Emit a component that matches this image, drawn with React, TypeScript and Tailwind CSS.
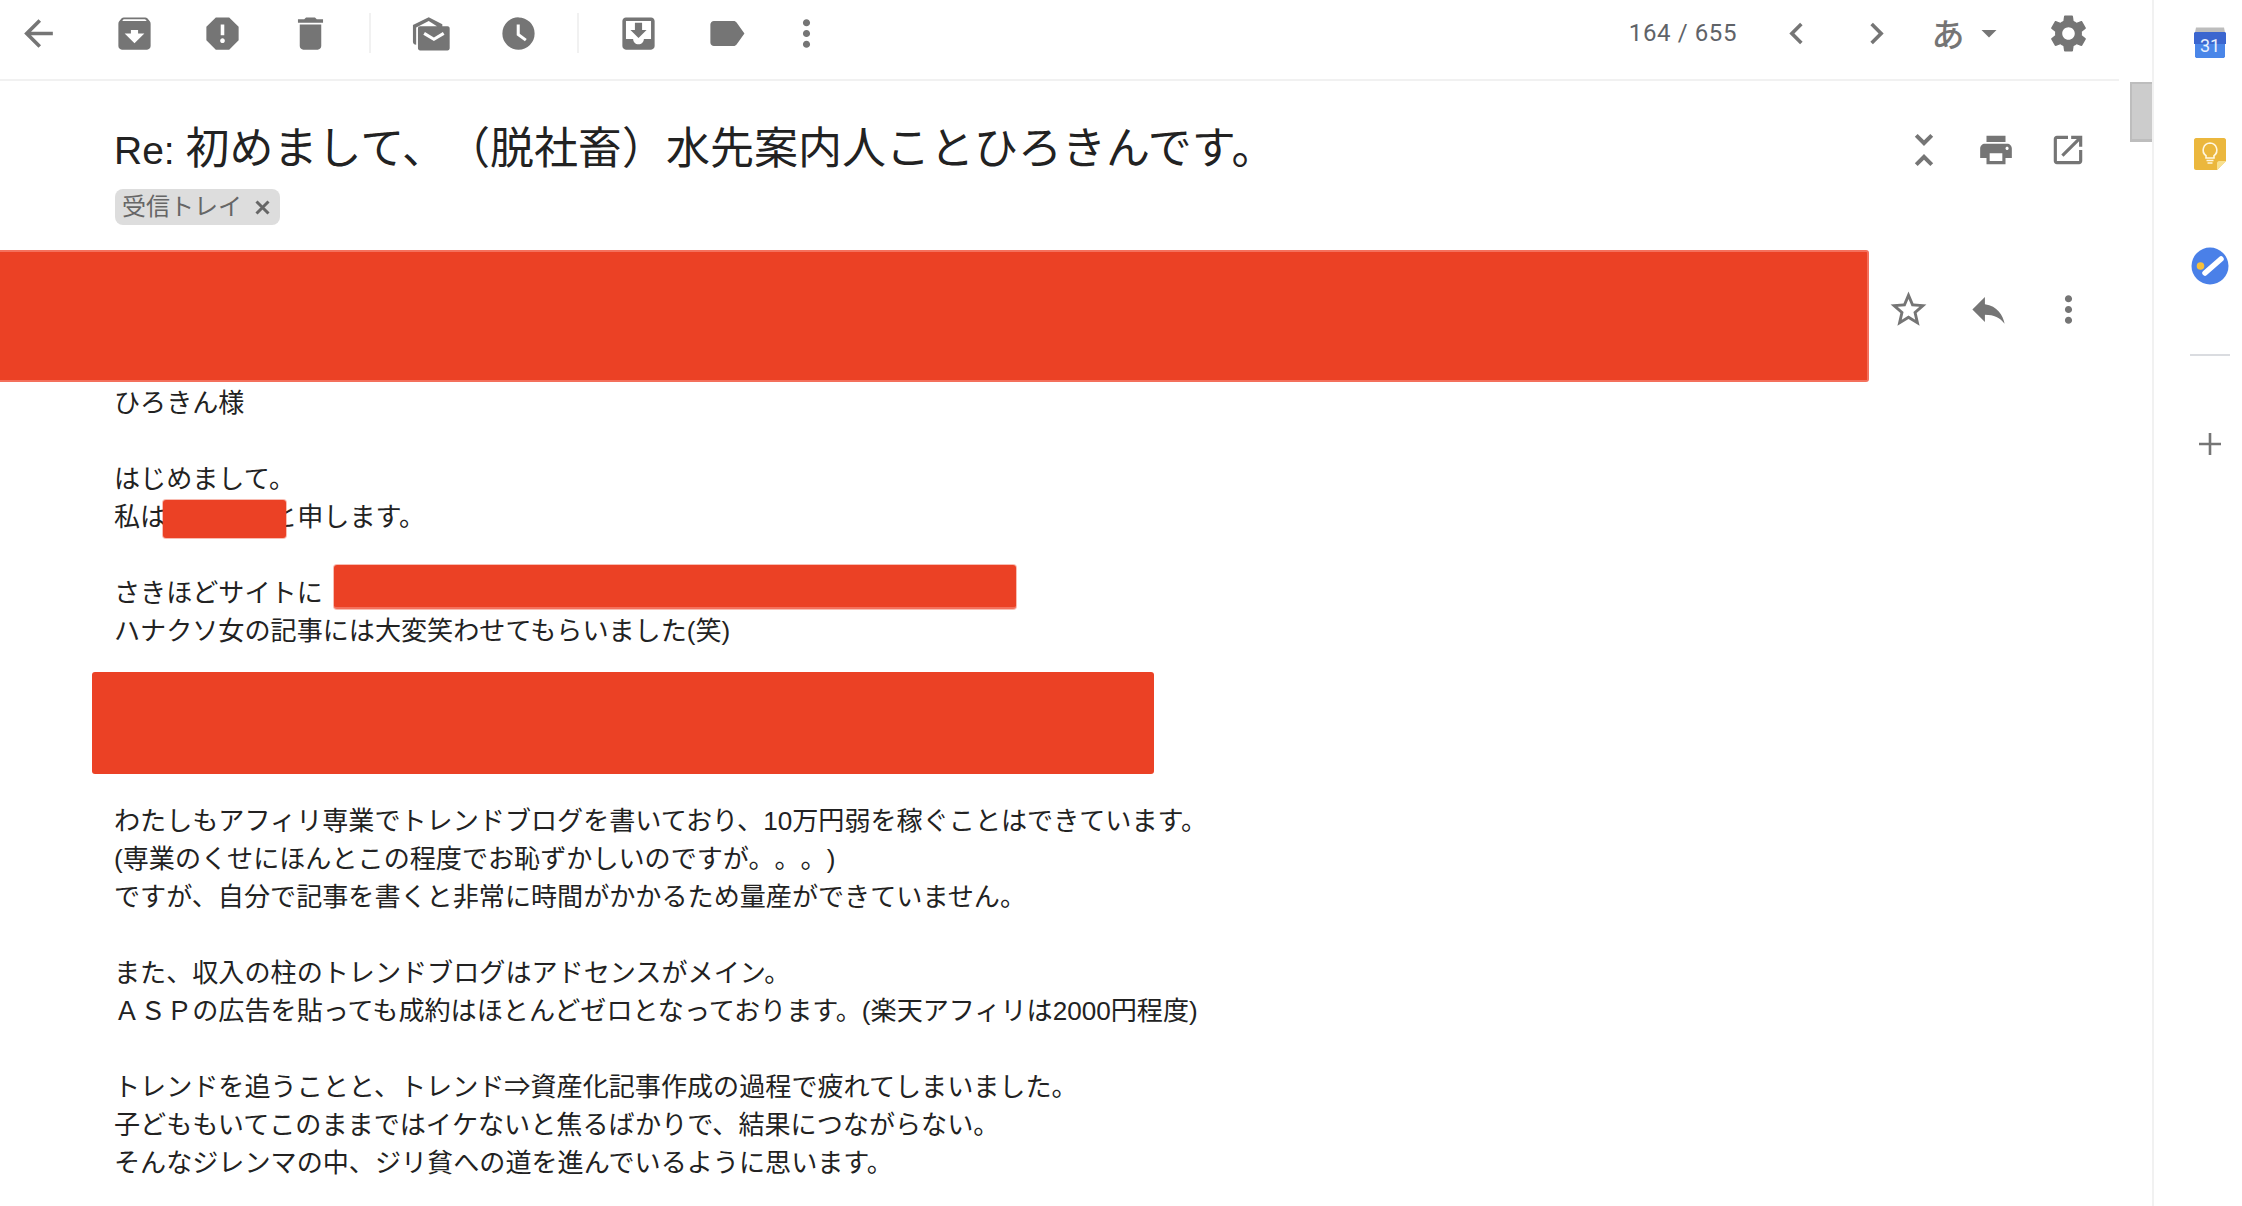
const paths = {
  back: "M20 11H7.83l5.59-5.59L12 4l-8 8 8 8 1.41-1.41L7.83 13H20v-2z",
  archive:
    "M20.54 5.23l-1.39-1.68C18.88 3.21 18.47 3 18 3H6c-.47 0-.88.21-1.16.55L3.46 5.23C3.17 5.57 3 6.02 3 6.5V19c0 1.1.9 2 2 2h14c1.1 0 2-.9 2-2V6.5c0-.48-.17-.93-.46-1.27zM12 17.5L6.5 12H10v-2h4v2h3.5L12 17.5zM5.12 5l.81-1h12l.94 1H5.12z",
  report:
    "M15.73 3H8.27L3 8.27v7.46L8.27 21h7.46L21 15.73V8.27L15.73 3zM12 17.3c-.72 0-1.3-.58-1.3-1.3 0-.72.58-1.3 1.3-1.3.72 0 1.3.58 1.3 1.3 0 .72-.58 1.3-1.3 1.3zm1-4.3h-2V7h2v6z",
  trash: "M6 19c0 1.1.9 2 2 2h8c1.1 0 2-.9 2-2V7H6v12zM19 4h-3.5l-1-1h-5l-1 1H5v2h14V4z",
  unread:
    "M6.2 8h15.3c.7 0 1.2.5 1.2 1.2v11.1c0 .7-.5 1.2-1.2 1.2H6.2c-.7 0-1.2-.5-1.2-1.2V9.2C5 8.5 5.5 8 6.2 8zm2.7 3.2l-.9 1.5 5.9 3.5 5.9-3.5-.9-1.5-5 3-5-3zM2.2 7.2L11 2.9l7.6 3.9v1.1h-3L11 5 4 8.7v9.6c-1 0-1.8-.6-1.8-1.5V7.2z",
  clock:
    "M12 3a9 9 0 1 0 0 18 9 9 0 0 0 0-18zm3.6 13.3L11 13V7h1.7v5.1l3.9 2.9-1 1.3z",
  moveTo:
    "M5 3h14c1.1 0 2 .9 2 2v14c0 1.1-.9 2-2 2H5c-1.1 0-2-.9-2-2V5c0-1.1.9-2 2-2zm0 2v10h4c0 1.7 1.3 3 3 3s3-1.3 3-3h4V5H5zm5 1h4v4h2.5L12 14.5 7.5 10H10V6z",
  label:
    "M17.63 5.84C17.27 5.33 16.67 5 16 5L5 5.01C3.9 5.01 3 5.9 3 7v10c0 1.1.9 1.99 2 1.99L16 19c.67 0 1.27-.33 1.63-.84L22 12l-4.37-6.16z",
  more: "M12 8c1.1 0 2-.9 2-2s-.9-2-2-2-2 .9-2 2 .9 2 2 2zm0 2c-1.1 0-2 .9-2 2s.9 2 2 2 2-.9 2-2-.9-2-2-2zm0 6c-1.1 0-2 .9-2 2s.9 2 2 2 2-.9 2-2-.9-2-2-2z",
  prev: "M15.41 7.41L14 6l-6 6 6 6 1.41-1.41L10.83 12z",
  next: "M10 6L8.59 7.41 13.17 12l-4.58 4.59L10 18l6-6z",
  caret: "M7 10l5 5 5-5z",
  gear: "M19.43 12.98c.04-.32.07-.64.07-.98s-.03-.66-.07-.98l2.11-1.65c.19-.15.24-.42.12-.64l-2-3.46c-.12-.22-.39-.3-.61-.22l-2.49 1c-.52-.4-1.08-.73-1.69-.98l-.38-2.65C14.46 2.18 14.25 2 14 2h-4c-.25 0-.46.18-.49.42l-.38 2.65c-.61.25-1.17.59-1.69.98l-2.49-1c-.23-.09-.49 0-.61.22l-2 3.46c-.13.22-.07.49.12.64l2.11 1.65c-.04.32-.07.65-.07.98s.03.66.07.98l-2.11 1.65c-.19.15-.24.42-.12.64l2 3.46c.12.22.39.3.61.22l2.49-1c.52.4 1.08.73 1.69.98l.38 2.65c.03.24.24.42.49.42h4c.25 0 .46-.18.49-.42l.38-2.65c.61-.25 1.17-.59 1.69-.98l2.49 1c.23.09.49 0 .61-.22l2-3.46c.12-.22.07-.49-.12-.64l-2.11-1.65zM12 15.5c-1.93 0-3.5-1.57-3.5-3.5s1.57-3.5 3.5-3.5 3.5 1.57 3.5 3.5-1.57 3.5-3.5 3.5z",
  collapse:
    "M7.41 18.59L8.83 20 12 16.83 15.17 20l1.41-1.41L12 14l-4.59 4.59zm9.18-13.18L15.17 4 12 7.17 8.83 4 7.41 5.41 12 10l4.59-4.59z",
  print:
    "M19 8H5c-1.66 0-3 1.34-3 3v6h4v4h12v-4h4v-6c0-1.66-1.34-3-3-3zm-3 11H8v-5h8v5zm3-7c-.55 0-1-.45-1-1s.45-1 1-1 1 .45 1 1-.45 1-1 1zm-1-9H6v4h12V3z",
  open: "M19 19H5V5h7V3H5c-1.11 0-2 .9-2 2v14c0 1.1.89 2 2 2h14c1.1 0 2-.9 2-2v-7h-2v7zM14 3v2h3.59l-9.83 9.83 1.41 1.41L19 6.41V10h2V3h-7z",
  star: "M22 9.24l-7.19-.62L12 2 9.19 8.63 2 9.24l5.46 4.73L5.82 21 12 17.27 18.18 21l-1.63-7.03L22 9.24zM12 15.4l-3.76 2.27 1-4.28-3.32-2.88 4.38-.38L12 6.1l1.71 4.04 4.38.38-3.32 2.88 1 4.28L12 15.4z",
  reply: "M10 9V5l-7 7 7 7v-4.1c5 0 8.5 1.6 11 5.1-1-5-4-10-11-11z",
};

function Icon({ d, size = 43 }: { d: string; size?: number }) {
  return (
    <svg width={size} height={size} viewBox="0 0 24 24" fill="#757575" className="shrink-0">
      <path d={d} fillRule="evenodd" />
    </svg>
  );
}

function Slot({ d, size, className = "w-[88px]" }: { d: string; size?: number; className?: string }) {
  return (
    <div className={`flex shrink-0 items-center justify-center ${className}`}>
      <Icon d={d} size={size} />
    </div>
  );
}

function Toolbar() {
  return (
    <div className="flex h-[81px] shrink-0 items-center border-b-2 border-[#f1f1f1] pb-[13px]">
      <Slot d={paths.back} className="w-[76px]" />
      <Slot d={paths.archive} className="ml-[14px] w-[88px]" />
      <Slot d={paths.report} />
      <Slot d={paths.trash} />
      <div className="ml-[15px] h-[40px] w-[2px] bg-[#f1f1f1]" />
      <Slot d={paths.unread} className="ml-[15px] w-[88px]" />
      <Slot d={paths.clock} />
      <div className="ml-[15px] h-[40px] w-[2px] bg-[#f1f1f1]" />
      <Slot d={paths.moveTo} className="ml-[15px] w-[88px]" />
      <Slot d={paths.label} />
      <Slot d={paths.more} className="w-[72px]" />
      <div className="ml-auto text-[24px] tracking-[0.6px] text-[#5f6368] [font-family:Roboto,sans-serif]">
        164 / 655
      </div>
      <Slot d={paths.prev} className="ml-[19px] w-[80px]" />
      <Slot d={paths.next} className="w-[80px]" />
      <div className="mr-[3px] ml-[12px] w-[40px] text-center text-[33px] leading-none font-medium text-[#757575] [font-family:'Noto_Sans_CJK_JP',sans-serif]">
        あ
      </div>
      <Icon d={paths.caret} size={36} />
      <Slot d={paths.gear} className="ml-[17px] w-[88px]" />
      <div className="w-[7px]" />
    </div>
  );
}

function Subject() {
  return (
    <div className="flex h-[169px] shrink-0">
      <div className="pl-[114px] pt-[42px]">
        <h1 className="text-[44px] leading-[52px] font-normal text-[#222]">
          <span className="text-[39px]">Re: </span>初めまして、（脱社畜）水先案内人ことひろきんです。
        </h1>
        <div className="mt-[12px] ml-[1px] flex h-[36px] w-[165px] items-center rounded-[8px] bg-[#dddddd] pl-[7px] text-[24px] leading-none text-[#666]">
          <span>受信トレイ</span>
          <svg width="15" height="15" viewBox="0 0 15 15" className="ml-[13px]">
            <path d="M1.5 1.5l12 12M13.5 1.5l-12 12" stroke="#666" strokeWidth="3" />
          </svg>
        </div>
      </div>
      <div className="ml-auto flex h-[93px] items-start pt-[45px] pr-[15px]">
        <Slot d={paths.collapse} size={48} className="w-[72px]" />
        <Slot d={paths.print} size={38} className="h-[48px] w-[72px]" />
        <Slot d={paths.open} size={38} className="h-[48px] w-[72px]" />
      </div>
    </div>
  );
}

function SenderRow() {
  return (
    <div className="flex h-[134px] shrink-0 items-start">
      <div className="h-[132px] w-[1869px] rounded-r-[3px] border-2 border-l-0 border-[#f4705c] bg-[#eb4125]" />
      <div className="flex h-[118px] items-center">
        <Slot d={paths.star} className="w-[79px]" />
        <Slot d={paths.reply} className="w-[80px]" />
        <Slot d={paths.more} className="w-[80px]" />
      </div>
    </div>
  );
}

function Body() {
  return (
    <div className="pl-[114px] text-[26.1px] leading-[38px] text-[#222]">
      <p>ひろきん様</p>
      <p className="mt-[38px]">はじめまして。</p>
      <p>
        私は
        <span className="relative top-[2px] -ml-[3px] -mr-[15px] inline-block h-[38px] w-[123px] rounded-[3px] bg-[#eb4125] align-top shadow-[0_0_0_1px_rgba(235,65,37,0.35)]" />
        と申します。
      </p>
      <p className="mt-[38px]">
        さきほどサイトに
        <span className="relative ml-[11px] inline-block h-[44px] w-[682px] -translate-y-[9px] rounded-[3px] border-b-2 border-[#f4705c] bg-[#eb4125] align-top shadow-[0_0_0_1px_rgba(235,65,37,0.35)]" />
      </p>
      <p className="-mt-[6px]">ハナクソ女の記事には大変笑わせてもらいました(笑)</p>
      <div className="mt-[22px] mb-[28px] -ml-[22px] h-[102px] w-[1062px] rounded-[3px] bg-[#eb4125]" />
      <p>わたしもアフィリ専業でトレンドブログを書いており、10万円弱を稼ぐことはできています。</p>
      <p>(専業のくせにほんとこの程度でお恥ずかしいのですが。。。)</p>
      <p>ですが、自分で記事を書くと非常に時間がかかるため量産ができていません。</p>
      <p className="mt-[38px]">また、収入の柱のトレンドブログはアドセンスがメイン。</p>
      <p>ＡＳＰの広告を貼っても成約はほとんどゼロとなっております。(楽天アフィリは2000円程度)</p>
      <p className="mt-[38px]">トレンドを追うことと、トレンド⇒資産化記事作成の過程で疲れてしまいました。</p>
      <p>子どももいてこのままではイケないと焦るばかりで、結果につながらない。</p>
      <p>そんなジレンマの中、ジリ貧への道を進んでいるように思います。</p>
    </div>
  );
}

function SideRail() {
  return (
    <div className="flex w-[90px] shrink-0 flex-col items-center border-l-2 border-[#f1f1f1] pt-[26px] pl-[24px]">
      {/* calendar */}
      <svg width="32" height="32" viewBox="0 0 32 32" className="shrink-0">
        <path d="M2 1.5h28l1 5H1z" fill="#bdbdbd" />
        <path d="M1 6h30l1 1v11H0V7z" fill="#3b66cf" />
        <path d="M1 18h30v12.5l-1 1.5H2l-1-1.5z" fill="#4a86e8" />
        <text x="16" y="26" textAnchor="middle" fill="#e8f0fe" fontSize="18" fontFamily="Roboto, sans-serif">
          31
        </text>
      </svg>
      {/* keep */}
      <svg width="32" height="32" viewBox="0 0 32 32" className="mt-[80px] shrink-0">
        <path d="M2 0h28c1 0 2 1 2 2v21l-9 9H2c-1 0-2-1-2-2V2C0 1 1 0 2 0z" fill="#ebb73d" />
        <path d="M32 23l-9 9v-7c0-1 1-2 2-2z" fill="#f8e08e" />
        <path d="M16 5a7 7 0 0 0-4 12.6V20h8v-2.4A7 7 0 0 0 16 5z" fill="none" stroke="#fff7e0" strokeWidth="1.6" />
        <path d="M12.5 22.5h7M13.5 25h5" stroke="#fff7e0" strokeWidth="1.6" />
      </svg>
      {/* tasks */}
      <svg width="38" height="38" viewBox="0 0 38 38" className="mt-[77px] shrink-0">
        <circle cx="19" cy="19" r="18.5" fill="#4a80e8" />
        <path d="M14 26L30 12" stroke="#fff" strokeWidth="5.5" strokeLinecap="round" />
        <circle cx="9.5" cy="19" r="3.8" fill="#f6bf3a" />
      </svg>
      <div className="mt-[69px] h-[2px] w-[40px] shrink-0 bg-[#dadce0]" />
      <svg width="24" height="24" viewBox="0 0 24 24" className="mt-[76px] shrink-0">
        <path d="M12 1v22M1 12h22" stroke="#757575" strokeWidth="2.6" />
      </svg>
    </div>
  );
}

export default function App() {
  return (
    <div className="flex h-[1206px] w-[2242px] overflow-hidden bg-white [text-spacing-trim:space-all] [font-family:'Liberation_Sans','Noto_Sans_CJK_JP',sans-serif]">
      <div className="flex w-[2119px] shrink-0 flex-col overflow-hidden">
        <Toolbar />
        <Subject />
        <SenderRow />
        <Body />
      </div>
      <div className="w-[33px] shrink-0 pt-[82px] pl-[11px]">
        <div className="h-[60px] w-[22px] border-2 border-r-0 border-b-[3px] border-[#bdbdbd] bg-[#cccccc]" />
      </div>
      <SideRail />
    </div>
  );
}
